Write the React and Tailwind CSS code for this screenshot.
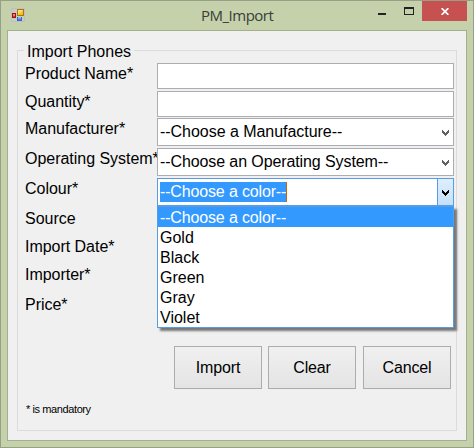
const COLOURS = ['--Choose a color--', 'Gold', 'Black', 'Green', 'Gray', 'Violet'];

function FormIcon() {
  return (
    <svg width="14" height="14" viewBox="0 0 14 14" shapeRendering="crispEdges">
      <defs>
        <linearGradient id="gold" x1="0" y1="0" x2="0.6" y2="1">
          <stop offset="0" stopColor="#ffee9c" />
          <stop offset="1" stopColor="#f5b800" />
        </linearGradient>
        <linearGradient id="sky" x1="0" y1="0" x2="0" y2="1">
          <stop offset="0" stopColor="#a5c8ff" />
          <stop offset="1" stopColor="#3f78dc" />
        </linearGradient>
      </defs>
      <rect width="14" height="14" fill="#bfbfc4" />
      <rect x="1" y="1" width="12" height="12" fill="#c6cdb9" />
      <rect x="1" y="5" width="4" height="5" fill="#a31212" />
      <rect x="2" y="6" width="2" height="2" fill="#f08070" />
      <rect x="2" y="8" width="2" height="1" fill="#d83a2a" />
      <rect x="6" y="1" width="7" height="7" fill="#a87712" />
      <rect x="7" y="2" width="5" height="5" fill="url(#gold)" />
      <rect x="6" y="9" width="5" height="4" fill="#3566c8" />
      <rect x="7" y="9" width="3" height="3" fill="url(#sky)" />
    </svg>
  );
}

function Chevron({ className }) {
  return (
    <svg className={className} width="7" height="6" viewBox="0 0 7 6" shapeRendering="crispEdges" fill="currentColor">
      <path d="M0 0h1v3h-1zM1 1h1v3h-1zM2 2h1v3h-1zM3 3h1v3h-1zM4 2h1v3h-1zM5 1h1v3h-1zM6 0h1v3h-1z" />
    </svg>
  );
}

function Combo({ text, className }) {
  return (
    <div className={`flex h-7 items-center justify-between border border-[#abadb3] bg-white pl-0.5 pr-1 ${className}`}>
      <span className="leading-5">{text}</span>
      <Chevron className="mt-0.5 text-[#606060]" />
    </div>
  );
}

function Button({ children, className = '' }) {
  return (
    <button className={`h-[43px] w-[88px] border border-[#acacac] bg-linear-to-b from-[#f0f0f0] to-[#e4e4e4] tracking-[-0.15px] ${className}`}>
      {children}
    </button>
  );
}

function TitleBar() {
  return (
    <header className="flex h-[29px] items-start">
      <div className="ml-2.5 mt-[7px] w-[60px]">
        <FormIcon />
      </div>
      <h1 className="ml-[130px] mt-1 w-[160px] font-['Open_Sans',sans-serif] text-[15px] leading-[21px] tracking-[-0.5px] text-[#3a3d36]">
        PM_Import
      </h1>
      <div className="ml-[17px] mt-3 h-0.5 w-2 bg-[#222]" />
      <div className="ml-[18px] mt-1.5 h-2 w-2.5 border border-t-2 border-[#222]" />
      <div className="ml-2 flex h-5 w-[45px] items-center justify-center bg-[#c75050]">
        <svg className="ml-px mt-px" width="8" height="7" viewBox="0 0 8 7" stroke="#fff" strokeWidth="1.8">
          <path d="M0.6 0.2L7.4 6.8M7.4 0.2L0.6 6.8" />
        </svg>
      </div>
    </header>
  );
}

export default function App() {
  return (
    <div className="h-[448px] w-[474px] overflow-hidden border border-[#979f86] bg-[#c4d1ab] font-['Liberation_Sans',Arial,sans-serif] text-base text-black">
      <TitleBar />
      <main className="mx-1.5 h-[411px] border border-[#a3b08c] bg-[#f0f0f0] px-[9px] pt-[19px]">
        <section className="h-[381px] border border-[#dcdcdc]">
          <h2 className="-mt-[9px] ml-1.5 w-[110px] whitespace-nowrap bg-[#f0f0f0] pl-[3px] leading-5">Import Phones</h2>
          <div className="mt-px flex pl-[7px]">
            <div className="w-[132px] shrink-0 whitespace-nowrap pt-px leading-5 tracking-[-0.03px]">
              <div className="h-7">Product Name*</div>
              <div className="h-[27px]">Quantity*</div>
              <div className="h-[30px]">Manufacturer*</div>
              <div className="h-[30px]">Operating System*</div>
              <div className="h-[30px]">Colour*</div>
              <div className="h-7">Source</div>
              <div className="h-7">Import Date*</div>
              <div className="h-[30px]">Importer*</div>
              <div className="h-5">Price*</div>
            </div>
            <div className="w-[297px]">
              <div className="h-[26px] border border-[#abadb3] bg-white" />
              <div className="mt-0.5 h-[26px] border border-[#abadb3] bg-white" />
              <Combo text="--Choose a Manufacture--" className="mt-px tracking-[-0.04px]" />
              <Combo text="--Choose an Operating System--" className="mt-0.5 tracking-[-0.1px]" />
              <div className="relative mt-0.5">
                <div className="flex h-7 items-center justify-between border border-[#569de5] bg-white pl-0.5">
                  <span className="border-r border-[#c86400] bg-[#3399ff] leading-5 tracking-[-0.15px] text-white">--Choose a color--</span>
                  <span className="flex h-full w-4 items-center justify-center border-l border-[#569de5] bg-linear-to-b from-[#dfeffc] to-[#c4e0fa]">
                    <Chevron className="mt-0.5" />
                  </span>
                </div>
                <ul className="absolute left-0 top-7 w-[297px] border border-[#569de5] bg-white leading-[22px] shadow-[3px_3px_2px_rgba(0,0,0,0.5)]">
                  {COLOURS.map((name, i) => (
                    <li key={name} className={`h-5 pl-0.5 ${i === 0 ? 'bg-[#3399ff] tracking-[-0.15px] text-white' : ''}`}>
                      {name}
                    </li>
                  ))}
                </ul>
              </div>
            </div>
          </div>
          <div className="mt-[31px] flex pl-[156px]">
            <Button>Import</Button>
            <Button className="ml-1.5">Clear</Button>
            <Button className="ml-[7px]">Cancel</Button>
          </div>
          <p className="mt-3 pl-2 text-[11px] leading-4 tracking-[-0.4px]">* is mandatory</p>
        </section>
      </main>
    </div>
  );
}
